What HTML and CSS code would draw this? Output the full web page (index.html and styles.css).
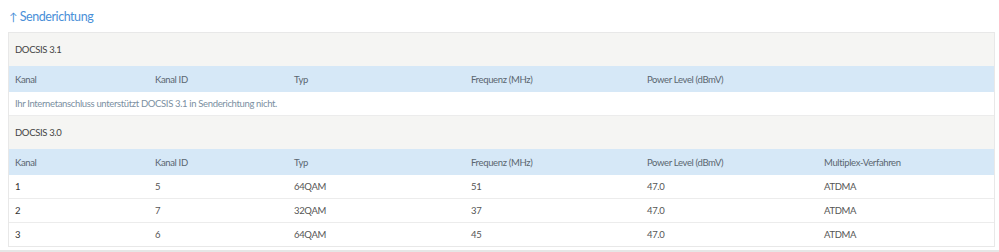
FILE: index.html
```html
<!DOCTYPE html>
<html lang="de">
<head>
<meta charset="utf-8">
<link rel="stylesheet" href="styles.css">
</head>
<body>
<div class="title"><span class="arrow">↑</span><span class="label">Senderichtung</span></div>
<div class="panel">
  <div class="section">DOCSIS 3.1</div>
  <div class="row head">
    <div>Kanal</div><div>Kanal ID</div><div>Typ</div><div>Frequenz (MHz)</div><div>Power Level (dBmV)</div><div></div>
  </div>
  <div class="msg">Ihr Internetanschluss unterstützt DOCSIS 3.1 in Senderichtung nicht.</div>
  <div class="section">DOCSIS 3.0</div>
  <div class="row head">
    <div>Kanal</div><div>Kanal ID</div><div>Typ</div><div>Frequenz (MHz)</div><div>Power Level (dBmV)</div><div>Multiplex-Verfahren</div>
  </div>
  <div class="row data">
    <div>1</div><div>5</div><div>64QAM</div><div>51</div><div>47.0</div><div>ATDMA</div>
  </div>
  <div class="row data">
    <div>2</div><div>7</div><div>32QAM</div><div>37</div><div>47.0</div><div>ATDMA</div>
  </div>
  <div class="row data last">
    <div>3</div><div>6</div><div>64QAM</div><div>45</div><div>47.0</div><div>ATDMA</div>
  </div>
</div>
<div class="next"></div>
</body>
</html>
```
FILE: styles.css
```css
html, body {
  margin: 0;
  padding: 0;
  background: #fff;
}
body {
  font-family: "Lato", "Open Sans", sans-serif;
  font-size: 9.5px;
  letter-spacing: -0.35px;
  color: #555;
}
.title {
  display: flex;
  align-items: center;
  gap: 3px;
  padding: 8px 0 0 9px;
  height: 32px;
  box-sizing: border-box;
  align-items: flex-start;
  line-height: 17px;
  font-size: 12.5px;
  letter-spacing: -0.45px;
  color: #4a8fd8;
}
.title .arrow {
  font-size: 11px;
  line-height: 18px;
}
.panel {
  margin: 0 4px 0 8px;
  border: 1px solid #e8e8e8;
}
.section {
  height: 33px;
  background: #f5f5f3;
  padding-left: 6px;
  display: flex;
  align-items: center;
  color: #444;
}
.row {
  display: grid;
  grid-template-columns: 140px 139px 177px 176px 177px 1fr;
  padding-left: 6px;
  align-items: center;
}
.head {
  height: 26px;
  background: #d6e8f7;
  color: #5a6670;
}
.data {
  height: 23px;
  border-bottom: 1px solid #ececec;
  color: #555;
}
.data.last {
  border-bottom: none;
}
.data div:first-child {
  color: #333;
}
.msg {
  height: 23px;
  border-bottom: 1px solid #ececec;
  padding-left: 6px;
  display: flex;
  align-items: center;
  color: #7b8fa1;
}
.next {
  margin: 3px 0 0 0;
  height: 4px;
  background: #e6e6e6;
}
```
